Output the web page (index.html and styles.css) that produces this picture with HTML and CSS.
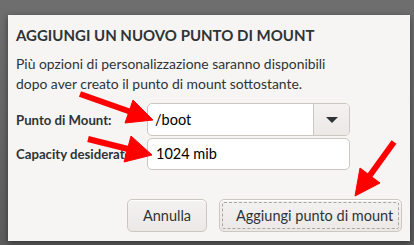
FILE: index.html
```html
<!DOCTYPE html>
<html>
<head>
    <title>Aggiungi un nuovo punto di mount</title>
    <link rel="stylesheet" href="styles.css">
</head>
<body>
    <div class="desktop">
        <div class="dialog">
            <h1>AGGIUNGI UN NUOVO PUNTO DI MOUNT</h1>
            <p class="intro">Più opzioni di personalizzazione saranno disponibili dopo aver creato il punto di mount sottostante.</p>

            <div class="form-grid">
                <label>Punto di Mount:</label>
                <div class="combo">
                    <span class="combo-value">/boot</span>
                    <span class="combo-toggle"><span class="caret"></span></span>
                </div>
                <label>Capacity desiderato:</label>
                <div class="entry">1024 mib</div>
            </div>

            <div class="actions">
                <button class="btn">Annulla</button>
                <button class="btn focused">Aggiungi punto di mount</button>
            </div>
        </div>

        <svg class="arrows" width="414" height="245" viewBox="0 0 414 245">
            <g fill="#ff0000" stroke="#ff0000">
                <line x1="80" y1="94" x2="131" y2="112" stroke-width="6"/>
                <polygon points="153,120 125,123 133,100" stroke-width="1"/>
                <line x1="88" y1="139" x2="130" y2="149.5" stroke-width="6"/>
                <polygon points="152,155 124,162 131,136" stroke-width="1"/>
                <line x1="394" y1="142" x2="368" y2="178" stroke-width="6"/>
                <polygon points="355,196 360,168 380,183" stroke-width="1"/>
            </g>
        </svg>
    </div>
</body>
</html>
```

FILE: styles.css
```css
body {
    margin: 0;
    font-family: 'Lato', sans-serif;
    color: #2e3436;
    background: #5f5f5f;
}

.desktop {
    position: relative;
    width: 414px;
    height: 245px;
    overflow: hidden;
    background: linear-gradient(to bottom, #6e6e6e, #5c5c5c);
}

.dialog {
    margin: 15px 0 0 8px;
    width: 402px;
    height: 226px;
    box-sizing: border-box;
    padding: 9px 8px 0 8px;
    background: #f6f5f4;
    box-shadow: 0 2px 6px rgba(0,0,0,0.45);
}

h1 {
    margin: 0;
    font-size: 15px;
    font-weight: 700;
    line-height: 22px;
    white-space: nowrap;
}

.intro {
    margin: 8px 0 0;
    max-width: 340px;
    font-size: 13.9px;
    line-height: 20px;
}

.form-grid {
    display: grid;
    grid-template-columns: 131px 203px;
    row-gap: 2px;
    margin-top: 9px;
    align-items: center;
}

.form-grid label {
    font-size: 13.2px;
    font-weight: 700;
    white-space: nowrap;
}

.combo,
.entry {
    box-sizing: border-box;
    height: 33px;
    border: 1px solid #cdc7c2;
    border-radius: 5px;
    background: #ffffff;
    font-size: 14.5px;
    color: #000;
}

.combo {
    display: flex;
}

.combo-value {
    flex: 1;
    padding-left: 7px;
    line-height: 31px;
}

.combo-toggle {
    width: 35px;
    display: flex;
    align-items: center;
    justify-content: center;
    border-left: 1px solid #cdc7c2;
    border-radius: 0 4px 4px 0;
    background: linear-gradient(to bottom, #f4f2f1, #ebe8e6);
}

.caret {
    width: 0;
    height: 0;
    border-left: 6px solid transparent;
    border-right: 6px solid transparent;
    border-top: 6px solid #2e3436;
}

.entry {
    height: 32px;
    padding-left: 8px;
    line-height: 30px;
}

.actions {
    display: flex;
    justify-content: flex-end;
    gap: 12px;
    margin-top: 29px;
}

.btn {
    height: 33px;
    padding: 0 16px;
    font-family: 'Lato', sans-serif;
    font-size: 14.5px;
    color: #2e3436;
    white-space: nowrap;
    border: 1px solid #cdc7c2;
    border-radius: 5px;
    background: linear-gradient(to bottom, #f4f2f1, #ebe8e6);
    box-shadow: inset 0 1px #ffffff;
}

.btn:first-child {
    width: 80px;
    padding: 0;
}

.btn.focused {
    width: 183px;
    outline: 1px dashed #a8a6a4;
    outline-offset: -4px;
}

.arrows {
    position: absolute;
    left: 0;
    top: 0;
}
```
